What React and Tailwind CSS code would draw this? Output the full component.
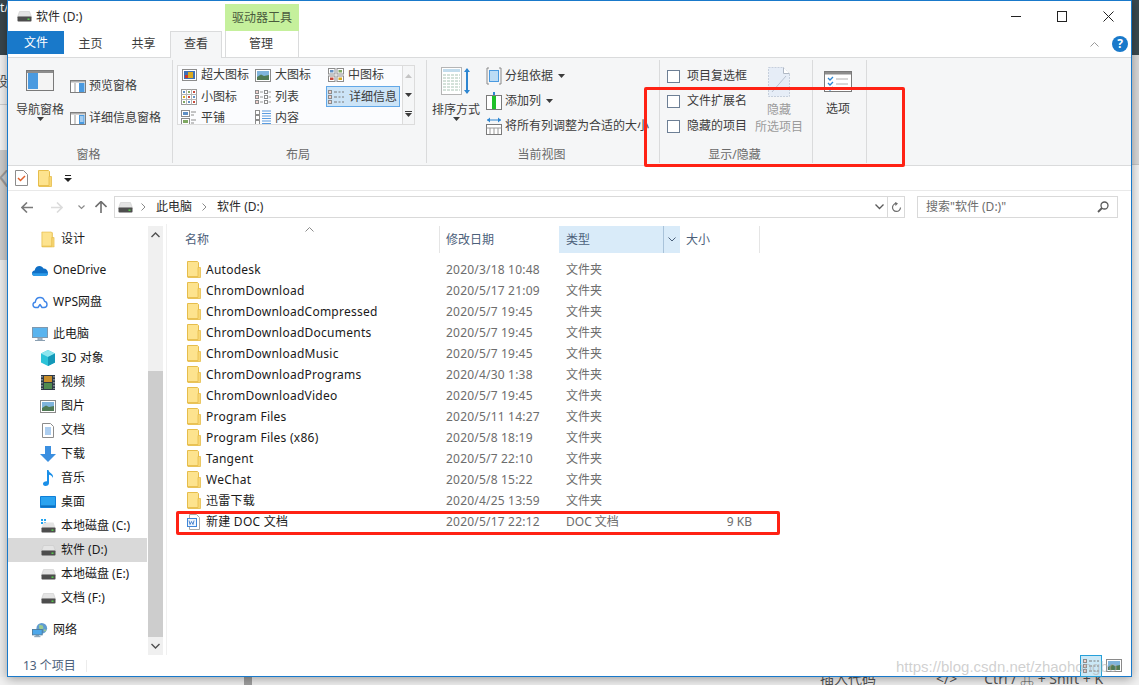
import React from "react";

const Drive = ({ c = "" }) => (
  <svg width="15" height="11" viewBox="0 0 15 11" className={c}>
    <path d="M2.5 0.5h10l2 5.5H0.5z" fill="#e4e4e4" stroke="#c4c4c4" strokeWidth="0.5" />
    <rect x="0.5" y="5.5" width="14" height="5" rx="0.8" fill="#4d4d4d" />
    <rect x="10.5" y="7.5" width="2" height="1.4" fill="#56d64a" />
  </svg>
);

const Folder = ({ c = "" }) => (
  <svg width="14" height="17" viewBox="0 0 14 17" className={c}>
    <path d="M0.5 0.5h10l1 1v14.5h-11z" fill="#fde38e" stroke="#e6bd4b" />
    <path d="M11 6.5h2.5v10H1v-1h10z" fill="#f8d775" stroke="#e6bd4b" strokeWidth="0.8" />
  </svg>
);

const Pic = () => (
  <svg width="16" height="13" viewBox="0 0 16 13">
    <rect x="0.5" y="0.5" width="15" height="12" fill="#fff" stroke="#8a8a8a" />
    <rect x="2" y="2" width="12" height="9" fill="#7fb4dc" />
    <path d="M2 8l4-2.5 3 1.5 5-1v5H2z" fill="#4f7a55" />
  </svg>
);

const GalleryIcon = ({ kind }) => {
  if (kind === "xl")
    return (
      <svg width="15" height="13" viewBox="0 0 15 13">
        <rect x="0.5" y="0.5" width="14" height="11" fill="#fff" stroke="#8c8c8c" />
        <rect x="2" y="2" width="11" height="8" fill="#3d6fb5" />
        <rect x="6" y="3" width="5" height="6" fill="#d9a81f" />
        <rect x="3" y="6" width="3" height="3" fill="#c8392b" />
      </svg>
    );
  if (kind === "l")
    return <Pic />;
  if (kind === "m")
    return (
      <svg width="16" height="14" viewBox="0 0 16 14">
        <rect x="0.5" y="0.5" width="6.5" height="5.5" fill="#fff" stroke="#8c8c8c" />
        <rect x="9" y="0.5" width="6.5" height="5.5" fill="#fff" stroke="#8c8c8c" />
        <rect x="0.5" y="8" width="6.5" height="5.5" fill="#fff" stroke="#8c8c8c" />
        <rect x="9" y="8" width="6.5" height="5.5" fill="#fff" stroke="#8c8c8c" />
        <rect x="2" y="2" width="3.5" height="2.5" fill="#5f8fc4" />
        <rect x="10.5" y="2" width="3.5" height="2.5" fill="#7fa862" />
        <rect x="2" y="9.5" width="3.5" height="2.5" fill="#c8483a" />
        <rect x="10.5" y="9.5" width="3.5" height="2.5" fill="#d9a81f" />
      </svg>
    );
  if (kind === "s")
    return (
      <svg width="16" height="16" viewBox="0 0 16 16">
        <rect x="0.5" y="0.5" width="15" height="15" fill="#fff" stroke="#9a9a9a" />
        <path d="M5.5 0.5v15M10.5 0.5v15M0.5 5.5h15M0.5 10.5h15" stroke="#b5b5b5" />
        <rect x="2" y="2" width="2" height="2" fill="#5f8fc4" />
        <rect x="7" y="2" width="2" height="2" fill="#7fa862" />
        <rect x="12" y="2" width="2" height="2" fill="#c8483a" />
        <rect x="2" y="7" width="2" height="2" fill="#d9a81f" />
        <rect x="7" y="7" width="2" height="2" fill="#c8483a" />
        <rect x="12" y="7" width="2" height="2" fill="#5f8fc4" />
        <rect x="2" y="12" width="2" height="2" fill="#7fa862" />
        <rect x="7" y="12" width="2" height="2" fill="#5f8fc4" />
        <rect x="12" y="12" width="2" height="2" fill="#c8483a" />
      </svg>
    );
  if (kind === "list" || kind === "detail")
    return (
      <svg width="16" height="14" viewBox="0 0 16 14">
        {[0, 5, 10].map((y) => (
          <g key={y}>
            <rect x="0.5" y={y + 0.5} width="3" height="3" fill="#fff" stroke="#8c8c8c" />
            <rect x="1.5" y={y + 1.5} width="1" height="1" fill="#c8483a" />
            {kind === "list" ? (
              <>
                <rect x="9.5" y={y + 0.5} width="3" height="3" fill="#fff" stroke="#8c8c8c" />
                <rect x="5" y={y + 1.5} width="3" height="1" fill="#9a9a9a" />
                <rect x="13.5" y={y + 1.5} width="2.5" height="1" fill="#9a9a9a" />
              </>
            ) : (
              <path d={`M6 ${y + 2}h3M10.5 ${y + 2}h2M14 ${y + 2}h2`} stroke="#7a7a7a" />
            )}
          </g>
        ))}
      </svg>
    );
  if (kind === "tile")
    return (
      <svg width="16" height="15" viewBox="0 0 16 15">
        <rect x="0.5" y="0.5" width="8" height="6" fill="#fff" stroke="#8c8c8c" />
        <rect x="2" y="2" width="5" height="3" fill="#5f8fc4" />
        <rect x="0.5" y="8.5" width="8" height="6" fill="#fff" stroke="#8c8c8c" />
        <rect x="2" y="10" width="5" height="3" fill="#7fa862" />
        <path d="M10 2h5M10 5h3M10 10h5M10 13h3" stroke="#8c8c8c" />
      </svg>
    );
  return (
    <svg width="16" height="15" viewBox="0 0 16 15">
      {[0, 5, 10].map((y) => (
        <g key={y}>
          <rect x="0.5" y={y + 0.5} width="4" height="4" fill="#fff" stroke="#8c8c8c" />
          <path d={`M7 ${y + 1}h9M7 ${y + 3.5}h9`} stroke="#5a9ce0" />
        </g>
      ))}
    </svg>
  );
};

const PaneIcon = ({ detail }) => (
  <svg width="16" height="13" viewBox="0 0 16 13">
    <rect x="0.5" y="0.5" width="15" height="12" fill="#fff" stroke="#7f7f7f" />
    <rect x="1" y="1" width="14" height="1.5" fill="#b0b0b0" />
    <rect x="9" y="3" width="5.5" height="9" fill="#4a9ae0" />
    {detail && <path d="M10 5h3.5M10 7h3.5M10 9h3.5" stroke="#fff" />}
    <path d="M5 3v9" stroke="#9a9a9a" />
  </svg>
);

const Caret = ({ c = "" }) => (
  <svg width="7" height="4" viewBox="0 0 7 4" className={c}>
    <path d="M0 0h7L3.5 4z" fill="#3c3c3c" />
  </svg>
);

const Row = ({ icon, text, c = "" }) => (
  <div className={`flex h-[20px] items-center ${c}`}>
    {icon}
    <span>{text}</span>
  </div>
);

const Group = ({ w, label, children }) => (
  <div className={`flex h-[103px] flex-col border-r border-[#dadbdc] ${w}`}>
    <div className="flex h-[87px]">{children}</div>
    <div className="flex h-[16px] items-center justify-center pr-[3px] text-[#6a6a6a]">{label}</div>
  </div>
);

const gallery = [
  ["xl", "超大图标"], ["l", "大图标"], ["m", "中图标"],
  ["s", "小图标"], ["list", "列表"], ["detail", "详细信息"],
  ["tile", "平铺"], ["content", "内容"],
];

const Ribbon = () => (
  <div className="flex h-[109px] border-y border-[#dadbdc] bg-[#f5f6f7] py-[2px] text-[#3c3c3c]">
    <Group w="w-[165px]" label="窗格">
      <div className="ml-[8px] flex w-[48px] flex-col items-center">
        <svg width="28" height="21" viewBox="0 0 28 21" className="mt-[10px] shrink-0">
          <rect x="0.5" y="0.5" width="27" height="20" fill="#f4f4f4" stroke="#7a7a7a" />
          <rect x="1" y="1" width="26" height="2" fill="#8d8d8d" />
          <rect x="2" y="3" width="10" height="16" fill="#4a9ae0" />
        </svg>
        <div className="mt-[11px] h-[16px] leading-[16px]">导航窗格</div>
        <Caret c="mt-[-1px]" />
      </div>
      <div className="ml-[6px] flex flex-col">
        <Row c="mt-[16px] gap-[3px]" icon={<PaneIcon />} text="预览窗格" />
        <Row c="mt-[12px] gap-[3px]" icon={<PaneIcon detail />} text="详细信息窗格" />
      </div>
    </Group>
    <Group w="w-[254px]" label="布局">
      <div className="ml-[4px] mt-[5px] flex h-[60px] w-[238px] border border-[#dcdcdc] bg-[#fbfcfe]">
        <div className="grid h-[58px] w-[224px] grid-cols-[74px_73px_77px] grid-rows-[20px_21px_21px] overflow-hidden">
          {gallery.map(([k, t], i) => (
            <div
              key={k}
              className={`flex items-center ${k === "detail" ? "gap-[5px]" : "gap-[4px]"} ${i < 3 ? "pb-[2px]" : ""} ${
                k === "detail" ? "ml-[1px] w-[74px] border border-[#62a8e8] bg-[#cce4f7] pl-[1px]" : "pl-[3px]"
              }`}
            >
              <span className="flex w-[16px] shrink-0 justify-center">
                <GalleryIcon kind={k} />
              </span>
              <span className="whitespace-nowrap">{t}</span>
            </div>
          ))}
        </div>
        <div className="flex flex-1 flex-col items-center border-l border-[#dcdcdc] bg-[#f5f6f7]">
          <svg width="7" height="4" viewBox="0 0 7 4" className="mt-[8px]"><path d="M0 4h7L3.5 0z" fill="#c4c4c4" /></svg>
          <Caret c="mt-[15px]" />
          <svg width="7" height="6" viewBox="0 0 7 6" className="mt-[14px]"><path d="M0 0h7v1H0zM0 2h7L3.5 6z" fill="#3c3c3c" /></svg>
        </div>
      </div>
    </Group>
    <Group w="w-[233px]" label="当前视图">
      <div className="ml-[5px] flex w-[48px] flex-col items-center">
        <svg width="30" height="28" viewBox="0 0 30 28" className="mt-[7px] shrink-0">
          <rect x="0.5" y="0.5" width="20" height="27" fill="#fff" stroke="#b5b5b5" />
          <rect x="2" y="2" width="17" height="3" fill="#c2dced" />
          <path d="M2 8h17M2 11h17M2 14h17M2 17h17M2 20h17M2 23h17" stroke="#a9c4b4" strokeDasharray="3 1" />
          <path d="M26 2v24" stroke="#2e86d1" strokeWidth="2" />
          <path d="M23 5l3-4 3 4zM23 23l3 4 3-4z" fill="#2e86d1" />
        </svg>
        <div className="mt-[7px] h-[16px] whitespace-nowrap leading-[16px]">排序方式</div>
        <Caret c="mt-[-1px]" />
      </div>
      <div className="ml-[6px] flex flex-col gap-[5px] pt-[6px]">
        <Row c="gap-[3px]" icon={
          <svg width="16" height="18" viewBox="0 0 16 18"><path d="M1 1h2M1 1v16h2M13 1h2v16h-2" fill="none" stroke="#8a8a8a" /><rect x="3.5" y="3.5" width="9" height="11" fill="#bcdcf5" stroke="#4a9ae0" /></svg>
        } text={<span className="flex items-center gap-[5px]">分组依据<Caret /></span>} />
        <Row c="gap-[3px]" icon={
          <svg width="16" height="18" viewBox="0 0 16 18"><rect x="0.5" y="3.5" width="15" height="14" fill="#fff" stroke="#7a7a7a" /><rect x="6" y="4" width="4" height="13" fill="#1fc02a" /><path d="M8 0v3" stroke="#2e86d1" strokeWidth="2" /></svg>
        } text={<span className="flex items-center gap-[5px]">添加列<Caret /></span>} />
        <Row c="gap-[3px]" icon={
          <svg width="16" height="18" viewBox="0 0 16 18"><path d="M1 3h14" stroke="#2e86d1" /><path d="M1 3l3-2.5v5zM15 3l-3-2.5v5z" fill="#2e86d1" /><rect x="0.5" y="7.5" width="15" height="10" fill="#fff" stroke="#7a7a7a" /><path d="M0.5 11h15M4 11v6M8 11v6M12 11v6" stroke="#9a9a9a" /></svg>
        } text={<span className="whitespace-nowrap">将所有列调整为合适的大小</span>} />
      </div>
    </Group>
    <Group w="w-[153px]" label="显示/隐藏">
      <div className="ml-[7px] flex flex-col gap-[5px] pt-[6px]">
        {["项目复选框", "文件扩展名", "隐藏的项目"].map((t) => (
          <div key={t} className="flex h-[20px] items-center gap-[7px]">
            <span className="h-[13px] w-[13px] border border-[#6d7f95] bg-white" />
            <span className="whitespace-nowrap">{t}</span>
          </div>
        ))}
      </div>
      <div className="ml-[8px] flex w-[48px] flex-col items-center text-[#9b9b9b]">
        <svg width="22" height="30" viewBox="0 0 22 30" className="mt-[7px] shrink-0">
          <path d="M0.5 0.5h15l6 6v23H0.5z" fill="#e6edf7" stroke="#c6cfdc" strokeDasharray="2 1" />
          <path d="M15.5 0.5v6h6" fill="#fff" stroke="#b0b8c4" />
          <path d="M4 25L18 9" stroke="#b8c2d0" />
        </svg>
        <div className="mt-[5px] h-[16px] leading-[16px]">隐藏</div>
        <div className="mt-[1px] h-[16px] whitespace-nowrap leading-[16px]">所选项目</div>
      </div>
    </Group>
    <Group w="w-[54px]" label="">
      <div className="flex w-full flex-col items-center pr-[3px]">
        <svg width="28" height="21" viewBox="0 0 28 21" className="mt-[11px] shrink-0">
          <rect x="0.5" y="0.5" width="27" height="20" fill="#fff" stroke="#7a7a7a" />
          <rect x="1" y="1" width="26" height="2.5" fill="#8d8d8d" />
          <path d="M4 7l2 2 3-3M4 12l2 2 3-3M4 17l2 2 3-3" fill="none" stroke="#2e86d1" strokeWidth="1.3" />
          <path d="M12 8h12M12 13h12M12 18h12" stroke="#b0b0b0" />
        </svg>
        <div className="mt-[9px] h-[16px] leading-[16px]">选项</div>
      </div>
    </Group>
  </div>
);

const Sidebar = () => {
  const drive = <span className="flex w-[16px] justify-center"><Drive /></span>;
  const items = [
    { t: "设计", d: 2, mt: "mt-[1px]", icon: <Folder c="scale-[0.95]" /> },
    { t: "OneDrive", d: 1, mt: "mt-[7px]", icon: (
      <svg width="16" height="11" viewBox="0 0 16 11"><path d="M3 11C1 11 0 9.600 0 8.200S1 5.500 2.600 5.400C3.200 2.500 5.200 1 7.500 1c1.800 0 3.200 1 4 2.500C14 3.500 16 5.500 16 8c0 1.800-1 3-3 3z" fill="#0f6fc6" /><path d="M3 11c-2 0-3-1.400-3-2.800h16c0 1.600-1 2.800-3 2.800z" fill="#2d9be8" /></svg>
    ) },
    { t: "WPS网盘", d: 1, mt: "mt-[8px]", icon: (
      <svg width="16" height="13" viewBox="0 0 16 13"><path d="M3.500 11.500C1.700 11.500 1 10 1 8.800S1.800 6.400 3.300 6.200C3.700 3.200 5.600 1.500 8 1.500c2.300 0 4 1.600 4.400 3.700C14 5.500 15 7 15 8.400c0 1.700-1.200 3.100-3 3.100H10L8 8.500l-2 3z" fill="#fff" stroke="#3f86e8" strokeWidth="1.400" strokeLinejoin="round" /></svg>
    ) },
    { t: "此电脑", d: 1, mt: "mt-[8px]", icon: (
      <svg width="16" height="15" viewBox="0 0 16 15"><rect x="0.5" y="0.5" width="15" height="10" fill="#5ab4ee" stroke="#7f98ae" /><path d="M6 11h4v2H6zM3 13.500h10" stroke="#8ba0b2" fill="#b9c7d2" /></svg>
    ) },
    { t: "3D 对象", d: 2, mt: "", icon: (
      <svg width="16" height="16" viewBox="0 0 16 16"><path d="M8 0l7 3.500v9L8 16l-7-3.500v-9z" fill="#2cc3d8" /><path d="M8 0l7 3.500L8 7 1 3.500z" fill="#8fe6ef" /><path d="M8 7l7-3.500v9L8 16z" fill="#1498b8" /></svg>
    ) },
    { t: "视频", d: 2, mt: "", icon: (
      <svg width="14" height="15" viewBox="0 0 14 15"><rect width="14" height="15" fill="#2f3a46" /><rect x="3" y="1" width="8" height="6" fill="#c98f2c" /><rect x="3" y="8" width="8" height="6" fill="#4f8a4f" /><path d="M1 1v13M13 1v13" stroke="#cfd6dc" strokeDasharray="1.500 1.500" /></svg>
    ) },
    { t: "图片", d: 2, mt: "", icon: <Pic /> },
    { t: "文档", d: 2, mt: "", icon: (
      <svg width="12" height="15" viewBox="0 0 12 15"><path d="M0.500 0.500h8l3 3v11h-11z" fill="#fff" stroke="#8c8c8c" /><path d="M3 5h6M3 7h6M3 9h6M3 11h6" stroke="#5a9ce0" /></svg>
    ) },
    { t: "下载", d: 2, mt: "", icon: (
      <svg width="16" height="16" viewBox="0 0 16 16"><path d="M5 0h6v8h5l-8 8-8-8h5z" fill="#3b8fe0" /></svg>
    ) },
    { t: "音乐", d: 2, mt: "", icon: (
      <svg width="12" height="16" viewBox="0 0 12 16"><path d="M5 0h1.500c.3 3 5.500 3.500 4.500 8-.6-2-2.500-3-4-3.300V13c0 1.800-1.500 3-3.500 3S1 15 1 13.500 2.800 11 5 11.200z" fill="#1a8fe8" /></svg>
    ) },
    { t: "桌面", d: 2, mt: "", icon: (
      <svg width="16" height="12" viewBox="0 0 16 12"><rect width="16" height="12" rx="0.800" fill="#0f7fd8" /><rect x="1" y="1" width="14" height="9" fill="#2aa3f0" /><path d="M1 10h14" stroke="#0b63ad" /></svg>
    ) },
    { t: "本地磁盘 (C:)", d: 2, mt: "", icon: (
      <span className="flex w-[16px] flex-col items-center">
        <svg width="15" height="14" viewBox="0 0 15 14">
          <path d="M0 0h2v2H0zM3 0h2v2H3zM0 3h2v2H0zM3 3h2v2H3z" fill="#1fa3f0" />
          <path d="M2.500 3.500h10l2 5.500H0.500z" fill="#e4e4e4" />
          <rect x="0.500" y="8.500" width="14" height="5" rx="0.800" fill="#4d4d4d" />
          <rect x="10.500" y="10.500" width="2" height="1.400" fill="#56d64a" />
        </svg>
      </span>
    ) },
    { t: "软件 (D:)", d: 2, mt: "", sel: true, icon: drive },
    { t: "本地磁盘 (E:)", d: 2, mt: "", icon: drive },
    { t: "文档 (F:)", d: 2, mt: "", icon: drive },
    { t: "网络", d: 1, mt: "mt-[8px]", icon: (
      <svg width="18" height="16" viewBox="0 0 18 16"><circle cx="11" cy="6" r="6" fill="#5f9bd0" /><path d="M8 2l4 1 1 3-3 2-2-2zM14 7l2 1-1 2-2-1z" fill="#9ccb8f" /><rect x="0.500" y="7.500" width="11" height="6" fill="#4da7ea" stroke="#4c7a9c" /><path d="M4 14h4M2.500 15.500h7" stroke="#6c8ca4" /></svg>
    ) },
  ];
  return (
    <div className="flex w-[139px] flex-col overflow-hidden text-[#1a1a1a]">
      {items.map((it) => (
        <div
          key={it.t}
          className={`flex h-[24px] shrink-0 items-center ${it.mt} ${it.sel ? "bg-[#d9d9d9]" : ""} ${
            it.d === 1 ? "gap-[5px] pl-[24px]" : "gap-[5px] pl-[32px]"
          }`}
        >
          <span className="flex w-[16px] shrink-0 justify-center">{it.icon}</span>
          <span className="whitespace-nowrap">{it.t}</span>
        </div>
      ))}
    </div>
  );
};

const files = [
  ["Autodesk", "2020/3/18 10:48"],
  ["ChromDownload", "2020/5/17 21:09"],
  ["ChromDownloadCompressed", "2020/5/7 19:45"],
  ["ChromDownloadDocuments", "2020/5/7 19:45"],
  ["ChromDownloadMusic", "2020/5/7 19:45"],
  ["ChromDownloadPrograms", "2020/4/30 1:38"],
  ["ChromDownloadVideo", "2020/5/7 19:45"],
  ["Program Files", "2020/5/11 14:27"],
  ["Program Files (x86)", "2020/5/8 18:19"],
  ["Tangent", "2020/5/7 22:10"],
  ["WeChat", "2020/5/8 15:22"],
  ["迅雷下载", "2020/4/25 13:59"],
];

const FileRow = ({ name, date, type, size, icon }) => (
  <div className="flex h-[21px] items-center">
    <span className="flex w-[39px] justify-end pr-[5px]">{icon}</span>
    <span className="w-[240px] whitespace-nowrap tracking-[0.25px] text-[#1a1a1a]">{name}</span>
    <span className="w-[120px] whitespace-nowrap tracking-[0.2px] text-[#6d6d6d]">{date}</span>
    <span className="w-[120px] whitespace-nowrap text-[#6d6d6d]">{type}</span>
    <span className="w-[66px] whitespace-nowrap text-right text-[#6d6d6d]">{size}</span>
  </div>
);

const FileList = () => (
  <div className="flex min-w-0 flex-1 flex-col">
    <div className="mt-[2px] flex h-[27px] text-[#4c607a]">
      <div className="relative flex w-[273px] items-center border-r border-[#e5e5e5] pl-[18px]">
        名称
        <svg width="9" height="5" viewBox="0 0 9 5" className="absolute left-[138px] top-[1px]">
          <path d="M0.500 4.500L4.500 0.500l4 4" fill="none" stroke="#8a8a8a" />
        </svg>
      </div>
      <div className="flex w-[119px] items-center pl-[6px]">修改日期</div>
      <div className="flex w-[105px] items-center border-r border-[#a9c3da] bg-[#d9ebf9] pl-[7px]">类型</div>
      <div className="flex w-[16px] items-center justify-center bg-[#d9ebf9]">
        <svg width="8" height="5" viewBox="0 0 8 5"><path d="M0.500 0.500l3.500 3.500 3.500-3.500" fill="none" stroke="#4c607a" /></svg>
      </div>
      <div className="flex w-[80px] items-center border-r border-[#e5e5e5] pl-[6px]">大小</div>
    </div>
    <div className="mt-[6px] flex flex-col">
      {files.map(([n, d]) => (
        <FileRow key={n} name={n} date={d} type="文件夹" size="" icon={<Folder />} />
      ))}
      <FileRow
        name="新建 DOC 文档"
        date="2020/5/17 22:12"
        type="DOC 文档"
        size="9 KB"
        icon={
          <svg width="14" height="16" viewBox="0 0 14 16">
            <path d="M2.500 0.500h7l3 3v12h-10z" fill="#fff" stroke="#a8a8a8" />
            <rect x="0.500" y="4.500" width="9" height="8" fill="#eef5fd" stroke="#3f86d8" />
            <path d="M2 6.500l1 4 1.500-3 1.500 3 1-4" fill="none" stroke="#2b6fc4" strokeWidth="0.800" />
          </svg>
        }
      />
    </div>
  </div>
);

export default function App() {
  return (
    <div className="relative h-[685px] w-[1139px] overflow-hidden bg-white font-['Noto_Sans','Noto_Sans_CJK_SC',sans-serif] text-[12px] leading-[16px]">
      <div className="flex h-[677px]">
        <div className="flex w-[7px] flex-col overflow-hidden text-[#555]">
          <div className="h-[55px] shrink-0 bg-[#39464c] text-white">t/</div>
          <div className="h-[50px] shrink-0 border-b border-[#cfcfcf] bg-[#f2f2f2] pt-[18px]">
            <span className="ml-[-6px] block text-[14px]">段</span>
          </div>
          <div className="h-[45px] shrink-0 bg-[#f4f4f4]" />
          <div className="h-[110px] shrink-0 bg-[#cdcdcd] pt-[20px] text-[#9b9b9b]">
            <span className="ml-[-6px] block text-[24px]">K</span>
          </div>
          <div className="flex-1 bg-[#ededed]" />
        </div>
        <div className="relative z-10 flex h-[677px] w-[1125px] flex-col border border-[#1979ca] bg-white shadow-[0_2px_10px_rgba(0,0,0,0.35)]">
          <div className="flex h-[30px] shrink-0 text-[#2a2a2a]">
            <div className="flex w-[217px] items-center gap-[4px] pl-[9px] pt-[1px]">
              <Drive />
              <span>软件 (D:)</span>
            </div>
            <div className="mt-[3px] flex h-[27px] w-[74px] items-center justify-center bg-[#c5f09c] text-[#4a5a3c]">驱动器工具</div>
            <div className="ml-auto flex">
              <div className="flex w-[46px] items-center justify-center">
                <svg width="10" height="1" viewBox="0 0 10 1"><rect width="10" height="1" fill="#222" /></svg>
              </div>
              <div className="flex w-[46px] items-center justify-center">
                <svg width="10" height="11" viewBox="0 0 10 11"><rect x="0.500" y="0.500" width="9" height="10" fill="none" stroke="#222" /></svg>
              </div>
              <div className="flex w-[46px] items-center justify-center">
                <svg width="11" height="11" viewBox="0 0 11 11"><path d="M0.500 0.500l10 10M10.500 0.500l-10 10" stroke="#222" /></svg>
              </div>
            </div>
          </div>
          <div className="flex h-[26px] shrink-0 text-[#3c3c3c]">
            <div className="flex h-[23px] w-[56px] items-center justify-center bg-[#1979ca] text-white">文件</div>
            <div className="flex w-[53px] items-center justify-center">主页</div>
            <div className="flex w-[53px] items-center justify-center">共享</div>
            <div className="relative z-10 flex h-[27px] w-[52px] items-center justify-center border-x border-t border-[#dadbdc] bg-[#f5f6f7] pb-[2px]">查看</div>
            <div className="ml-[3px] flex w-[74px] items-center justify-center border-x border-[#dadbdc] pr-[2px]">管理</div>
            <div className="ml-auto flex items-center gap-[13px] pr-[3px]">
              <svg width="9" height="5" viewBox="0 0 9 5"><path d="M0.500 4.500l4-4 4 4" fill="none" stroke="#9a9a9a" /></svg>
              <span className="flex h-[16px] w-[16px] items-center justify-center rounded-full bg-[#1979ca] text-[12px] font-bold text-white">?</span>
            </div>
          </div>
          <Ribbon />
          <div className="flex h-[25px] shrink-0 items-center gap-[10px] border-b border-[#e9e9e9] pl-[7px]">
            <svg width="13" height="16" viewBox="0 0 13 16">
              <path d="M0.500 0.500h8l4 4v11h-12z" fill="#fff" stroke="#8c8c8c" />
              <path d="M3 8l2.500 2.500L10 6" fill="none" stroke="#e0602a" strokeWidth="1.500" />
            </svg>
            <Folder />
            <svg width="8" height="7" viewBox="0 0 8 7" className="ml-[2px]"><path d="M1 0h6v1H1zM0 3h8L4 7z" fill="#222" /></svg>
          </div>
          <div className="flex h-[33px] shrink-0 items-start pt-[5px]">
            <div className="flex h-[22px] items-center">
              <svg width="12" height="11" viewBox="0 0 12 11" className="ml-[13px]"><path d="M6 0.500L1 5.500l5 5M1 5.500h11" fill="none" stroke="#7a7a7a" strokeWidth="1.600" /></svg>
              <svg width="12" height="11" viewBox="0 0 12 11" className="ml-[18px]"><path d="M6 0.500l5 5-5 5M11 5.500H0" fill="none" stroke="#dcdcdc" strokeWidth="1.600" /></svg>
              <svg width="7" height="5" viewBox="0 0 7 5" className="ml-[15px]"><path d="M0.500 0.500l3 3 3-3" fill="none" stroke="#8a8a8a" strokeWidth="1.200" /></svg>
              <svg width="12" height="12" viewBox="0 0 12 12" className="ml-[10px]"><path d="M0.500 6l5.500-5.500L11.500 6M6 1v11" fill="none" stroke="#6e6e6e" strokeWidth="1.600" /></svg>
            </div>
            <div className="ml-[7px] flex h-[22px] w-[791px] items-center border border-[#d9d9d9] text-[#2a2a2a]">
              <Drive c="ml-[3px]" />
              <svg width="5" height="8" viewBox="0 0 5 8" className="ml-[8px]"><path d="M0.500 0.500L4 4 0.500 7.500" fill="none" stroke="#8a8a8a" /></svg>
              <span className="ml-[10px]">此电脑</span>
              <svg width="5" height="8" viewBox="0 0 5 8" className="ml-[10px]"><path d="M0.500 0.500L4 4 0.500 7.500" fill="none" stroke="#8a8a8a" /></svg>
              <span className="ml-[10px]">软件 (D:)</span>
              <svg width="9" height="6" viewBox="0 0 9 6" className="ml-auto mr-[3px]"><path d="M0.500 0.500l4 4 4-4" fill="none" stroke="#5a5a5a" strokeWidth="1.300" /></svg>
              <div className="flex h-full w-[17px] items-center justify-center border-l border-[#d9d9d9]">
                <svg width="11" height="11" viewBox="0 0 11 11"><path d="M9.500 5.500A4 4 0 1 1 6 1.500" fill="none" stroke="#6e6e6e" strokeWidth="1.200" /><path d="M4 0l3 1.500L4.500 4z" fill="#6e6e6e" /></svg>
              </div>
            </div>
            <div className="ml-[12px] flex h-[22px] w-[201px] items-center justify-between border border-[#d9d9d9] px-[8px] text-[#6d6d6d]">
              <span>搜索"软件 (D:)"</span>
              <svg width="12" height="12" viewBox="0 0 12 12"><circle cx="7.500" cy="4.500" r="3.500" fill="none" stroke="#5a5a5a" strokeWidth="1.300" /><path d="M5 7l-4 4" stroke="#5a5a5a" strokeWidth="1.800" /></svg>
            </div>
          </div>
          <div className="flex h-[431px] shrink-0">
            <div className="flex">
              <div className="pt-[2px]">
                <Sidebar />
              </div>
              <div className="mt-[2px] ml-[1px] flex h-[429px] w-[15px] flex-col bg-[#f0f0f0]">
                <div className="flex h-[18px] items-center justify-center">
                  <svg width="9" height="6" viewBox="0 0 9 6"><path d="M0.500 5l4-4 4 4" fill="none" stroke="#505050" strokeWidth="1.400" /></svg>
                </div>
                <div className="mt-[127px] h-[266px] bg-[#cdcdcd]" />
                <div className="flex h-[18px] items-center justify-center">
                  <svg width="9" height="6" viewBox="0 0 9 6"><path d="M0.500 1l4 4 4-4" fill="none" stroke="#505050" strokeWidth="1.400" /></svg>
                </div>
              </div>
              <div className="ml-[3px] w-px bg-[#f0f0f0]" />
            </div>
            <FileList />
          </div>
          <div className="flex h-[21px] shrink-0 items-center text-[#4c607a]">
            <span className="w-[78px] pl-[15px] whitespace-nowrap">13 个项目</span>
            <span className="h-[12px] w-px bg-[#ececec]" />
            <div className="ml-auto mr-[9px] flex items-center gap-[4px]">
              <div className="flex h-[22px] w-[22px] items-center justify-center border border-[#26a0da] bg-[#cbe8f6]">
                <GalleryIcon kind="detail" />
              </div>
              <Pic />
            </div>
          </div>
        </div>
        <div className="flex w-[7px] flex-col">
          <div className="h-[55px] shrink-0 bg-[#3b4a50]" />
          <div className="h-[110px] shrink-0 border-b border-[#c8c8c8] bg-[#d9d9d9]" />
          <div className="flex-1 bg-[#f3f3f3]" />
        </div>
      </div>
      <div className="flex h-[8px] bg-[#f1f1f1] text-[14px] leading-[16px] text-[#555]">
        <div className="ml-[244px] h-full w-[8px] bg-[#a0a0a0]" />
        <div className="ml-[568px] mt-[-6px] whitespace-nowrap">插入代码</div>
        <div className="ml-[60px] mt-[-6px] whitespace-nowrap">&lt;/&gt;</div>
        <div className="ml-[27px] mt-[-6px] whitespace-nowrap">Ctrl / ⌘ + Shift + K</div>
      </div>
      <div className="absolute left-[644px] top-[87px] z-20 h-[80px] w-[261px] rounded-[2px] border-[3px] border-[#ff2214]" />
      <div className="absolute left-[176px] top-[511px] z-20 h-[24px] w-[604px] rounded-[2px] border-[3px] border-[#ff2214]" />
      <div className="absolute left-[896px] top-[659px] z-20 whitespace-nowrap font-['Liberation_Sans',sans-serif] text-[15px] text-[#b0b0b0]/60">https://blog.csdn.net/zhaohongbo</div>
    </div>
  );
}
